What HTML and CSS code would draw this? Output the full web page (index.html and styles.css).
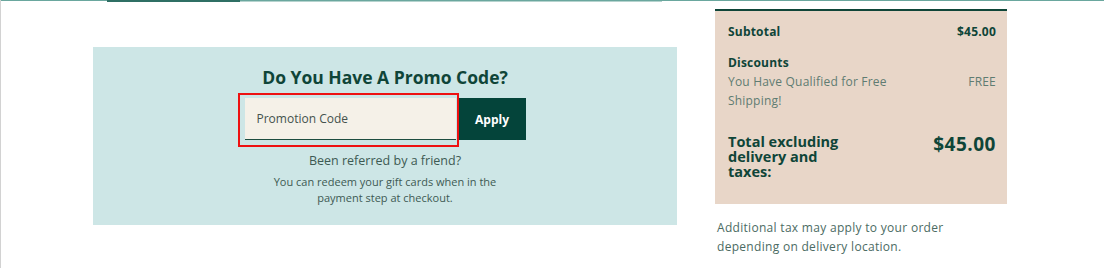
FILE: index.html
```html
<!DOCTYPE html>
<html lang="en">

<head>
    <meta charset="UTF-8">
    <meta name="viewport" content="width=device-width, initial-scale=1.0">
    <title>Cart</title>

    <link rel="stylesheet" href="styles.css">

</head>

<body>
    <div class="tabs">
        <div class="tabActive"></div>
        <div class="tabRest"></div>
    </div>

    <main class="cart">
        <section class="promo">
            <h2 class="promoTitle">Do You Have A Promo Code?</h2>
            <div class="promoForm">
                <div class="promoHighlight">
                    <input type="text" class="promoInput" placeholder="Promotion Code">
                </div>
                <button class="button">Apply</button>
            </div>
            <p class="referral">Been referred by a friend?</p>
            <p class="giftcards">You can redeem your gift cards when in the<br>payment step at checkout.</p>
        </section>

        <aside class="summaryCol">
            <div class="summary">
                <div class="row bold">
                    <span>Subtotal</span>
                    <span>$45.00</span>
                </div>
                <div class="discounts">
                    <div class="bold">Discounts</div>
                    <div class="row light">
                        <span class="discountName">You Have Qualified for Free Shipping!</span>
                        <span>FREE</span>
                    </div>
                </div>
                <div class="row total">
                    <span class="totalLabel">Total excluding delivery and taxes:</span>
                    <span class="totalValue">$45.00</span>
                </div>
            </div>
            <p class="taxNote">Additional tax may apply to your order<br>depending on delivery location.</p>
        </aside>
    </main>
</body>

</html>
```

FILE: styles.css
```css
body {
    font-family: "Open Sans", "Liberation Sans", sans-serif;
    background-color: #ffffff;
    color: #0f4538;
    margin: 0px;
    height: 268px;
    border-left: 1px solid #d2d2d2;
    box-sizing: border-box;
}

.tabs {
    display: flex;
    border-top: 1px solid #6aa79e;
    height: 1px;
    padding-left: 106px;
}

.tabActive {
    width: 133px;
    height: 2px;
    margin-top: -1px;
    background-color: #2f6f64;
}

.tabRest {
    width: 422px;
    height: 1px;
    background-color: #b5d3ce;
}

.cart {
    display: flex;
    align-items: flex-start;
}

.promo {
    width: 584px;
    height: 178px;
    margin-left: 92px;
    margin-top: 45px;
    background-color: #cde6e6;
    display: flex;
    flex-direction: column;
    align-items: center;
    box-sizing: border-box;
    padding-top: 18px;
}

.promoTitle {
    font-size: 17.5px;
    font-weight: 700;
    margin: 0px;
    line-height: 24px;
}

.promoForm {
    display: flex;
    align-items: flex-start;
    margin-top: 4px;
    margin-right: 7px;
}

.promoHighlight {
    border: 2px solid #ee1111;
    padding: 3px 1px 5px 5px;
}

.promoInput {
    display: block;
    width: 211px;
    height: 42px;
    box-sizing: border-box;
    border: none;
    border-bottom: 1px solid #1d4d40;
    background-color: #f5f1e8;
    padding: 0px 12px;
    font-family: inherit;
    font-size: 12px;
    outline: none;
}

.promoInput::placeholder {
    color: #44524d;
}

.button {
    background-color: #04443a;
    border: none;
    color: #ffffff;
    width: 67px;
    height: 42px;
    margin-top: 5px;
    font-family: inherit;
    font-weight: 700;
    font-size: 12px;
}

.referral {
    margin: 6px 0px 0px 0px;
    font-size: 12.5px;
    line-height: 16px;
    color: #3d5a53;
}

.giftcards {
    margin: 5px 0px 0px 0px;
    font-size: 11px;
    line-height: 16px;
    text-align: center;
    color: #3d5a53;
}

.summaryCol {
    width: 292px;
    margin-left: 38px;
    margin-top: 7px;
}

.summary {
    background-color: #e8d6c8;
    border-top: 2px solid #0f4538;
    height: 195px;
    box-sizing: border-box;
    padding: 13px 11px 0px 13px;
    font-size: 12px;
    letter-spacing: 0.2px;
}

.row {
    display: flex;
    justify-content: space-between;
    align-items: flex-start;
}

.bold {
    font-weight: 700;
    line-height: 16px;
}

.discounts {
    margin-top: 15px;
}

.light {
    color: #5f7c72;
    line-height: 19px;
    margin-top: 1px;
}

.discountName {
    width: 170px;
}

.total {
    margin-top: 24px;
}

.totalLabel {
    width: 130px;
    font-size: 14.5px;
    font-weight: 700;
    line-height: 15px;
    letter-spacing: 0px;
}

.totalValue {
    font-size: 19px;
    font-weight: 700;
    line-height: 24px;
    margin-top: -2px;
    letter-spacing: 0.5px;
}

.taxNote {
    margin: 14px 0px 0px 2px;
    font-size: 12px;
    line-height: 19px;
    letter-spacing: 0.3px;
    color: #4b6b63;
}
```
